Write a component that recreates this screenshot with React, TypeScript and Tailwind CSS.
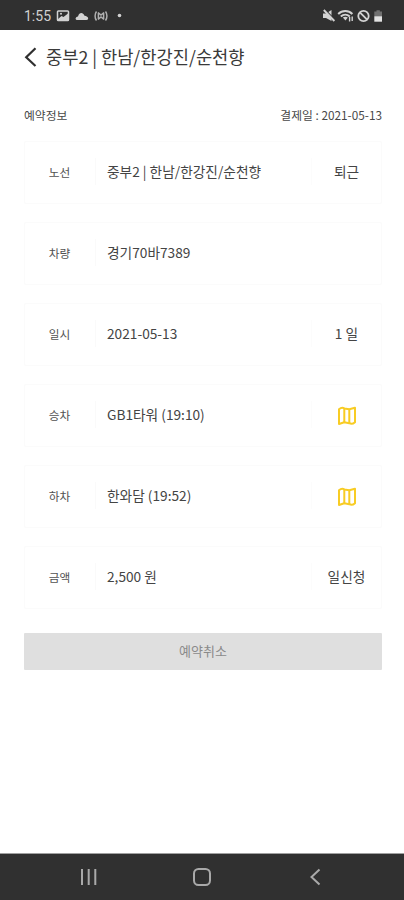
import React from "react";

interface RowProps {
  label: string;
  value: string;
  side?: string;
  map?: boolean;
}

const rows: RowProps[] = [
  { label: "노선", value: "중부2 | 한남/한강진/순천향", side: "퇴근" },
  { label: "차량", value: "경기70바7389" },
  { label: "일시", value: "2021-05-13", side: "1 일" },
  { label: "승차", value: "GB1타워 (19:10)", map: true },
  { label: "하차", value: "한와담 (19:52)", map: true },
  { label: "금액", value: "2,500 원", side: "일신청" },
];

const MapIcon = () => (
  <svg width="20" height="20" viewBox="0 0 20 20" fill="none" stroke="#f8cc24" strokeWidth="2" strokeLinejoin="round" className="mt-[2px]">
    <path d="M2 3.3C4 1.5 5.8 1.3 7.3 2.4L12.3 3.2L18 1.8V16.2C16.2 17.8 14 18.2 12.3 17.2L7.3 16.2L2 18Z" />
    <path d="M7.3 2.4V16.2M12.3 3.2V17.2" />
  </svg>
);

const StatusBar = () => (
  <div className="h-[30px] bg-[#303030] flex items-center justify-between pl-[24px] pr-[20px] text-[#d2d2d2]">
    <div className="flex items-center">
      <div className="w-[32px] font-['Roboto',sans-serif] text-[14px] leading-[16px] pt-[2px] whitespace-nowrap">1:55</div>
      <svg width="67" height="14" viewBox="0 0 67 14" fill="none" className="mt-px">
        <rect x="1.5" y="2" width="11" height="9.5" rx="0.8" stroke="#d2d2d2" strokeWidth="1.5" />
        <path d="M2 10L5.5 7L7.5 8L12 4.5V11H2Z" fill="#d2d2d2" />
        <circle cx="5" cy="4.7" r="1" fill="#d2d2d2" />
        <path d="M21.5 11C18.8 11 19 8 22 7.4C23.5 2.8 27 3.2 28.5 6.8C33 7.4 33 11 30.5 11Z" fill="#d2d2d2" />
        <path d="M40.5 2.5C38.6 5 38.6 9 40.5 11.5M49.5 2.5C51.4 5 51.4 9 49.5 11.5M42 3.5L45 6L48 3.5M42 10.5L45 8L48 10.5M42.4 4V10M47.6 4V10" stroke="#b0b0b0" strokeWidth="1.5" />
        <circle cx="63.5" cy="6.5" r="1.8" fill="#d2d2d2" />
      </svg>
    </div>
    <svg width="62" height="14" viewBox="0 0 62 14" fill="none" className="mt-px">
      <path d="M1 4.5H4L9.5 1V12L4 9H1Z" fill="#d2d2d2" />
      <path d="M3.5 1L13 11" stroke="#303030" strokeWidth="1.2" />
      <path d="M1.8 1L12.4 12" stroke="#d2d2d2" strokeWidth="1.9" />
      <path d="M16.2 5C20.2 1 26.4 1 30.4 5M18.8 7.5C21.5 5 25.1 5 27.8 7.5" stroke="#d2d2d2" strokeWidth="1.9" />
      <path d="M20.8 8.6C22.5 7.6 24 7.6 25.8 8.6L23.5 11.6Z" fill="#d2d2d2" />
      <path d="M27.6 8V12.5M30.2 7.5V12" stroke="#d2d2d2" strokeWidth="1.4" />
      <circle cx="41.5" cy="7" r="5.2" stroke="#d2d2d2" strokeWidth="1.8" />
      <path d="M37.9 3.4L45.1 10.6" stroke="#d2d2d2" strokeWidth="1.8" />
      <path d="M54.5 1.2H57.8V2.5H60V7H52.3V2.5H54.5Z" fill="#707070" />
      <path d="M52.3 7.2H60V12.7H52.3Z" fill="#e2e2e2" />
    </svg>
  </div>
);

const InfoRow = ({ label, value, side, map }: RowProps) => (
  <div className="h-[63px] flex items-center border border-[#fbfbfb] rounded-[2px] pb-[2px] text-[#444444]">
    <div className="w-[71px] h-[27px] flex items-center justify-center pr-px border-r border-[#fafafa] text-[11.7px] text-[#525252]">
      {label}
    </div>
    <div className="flex-1 pl-[11px] text-[13.7px] whitespace-nowrap">{value}</div>
    <div
      className={
        side || map
          ? "w-[70px] h-[27px] flex items-center justify-center border-l border-[#fcfcfc] text-[13.7px]"
          : "w-[70px]"
      }
    >
      {map ? <MapIcon /> : side}
    </div>
  </div>
);

const App = () => {
  return (
    <div className="w-full h-screen flex flex-col bg-white overflow-hidden font-['Noto_Sans_CJK_KR',sans-serif]">
      <StatusBar />
      <header className="h-[54px] flex items-center pl-[24px] text-[#3a3a3a]">
        <svg width="22" height="20" viewBox="0 0 22 20" fill="none" stroke="#303030" strokeWidth="2.2">
          <path d="M11.5 1.2L2.2 10.2L11.5 19" />
        </svg>
        <h1 className="text-[17.65px] leading-[26px] pb-px whitespace-nowrap">중부2 | 한남/한강진/순천향</h1>
      </header>
      <main className="flex-1 px-[24px] pr-[22px]">
        <div className="mt-[22px] h-[18px] flex items-center justify-between text-[11.8px] text-[#484848]">
          <span>예약정보</span>
          <span>결제일 : 2021-05-13</span>
        </div>
        <div className="mt-[17px] flex flex-col gap-[18px]">
          {rows.map((row) => (
            <InfoRow key={row.label} {...row} />
          ))}
        </div>
        <button className="mt-[24px] w-full h-[37px] flex items-center justify-center bg-[#dfdfdf] rounded-[1px] pb-[2px] text-[13px] text-[#8a8a8a]">
          예약취소
        </button>
      </main>
      <nav className="h-[47px] bg-[#303030] border-t border-[#a0a0a0]">
        <svg width="404" height="46" viewBox="0 0 404 46" fill="none" stroke="#a9a9a9" strokeWidth="2">
          <path d="M82 15V31M88.7 15V31M95.3 15V31" />
          <rect x="194" y="15" width="16" height="16" rx="4.5" />
          <path d="M319.5 15.5L311.5 23L319.5 30.5" />
        </svg>
      </nav>
    </div>
  );
};

export default App;
